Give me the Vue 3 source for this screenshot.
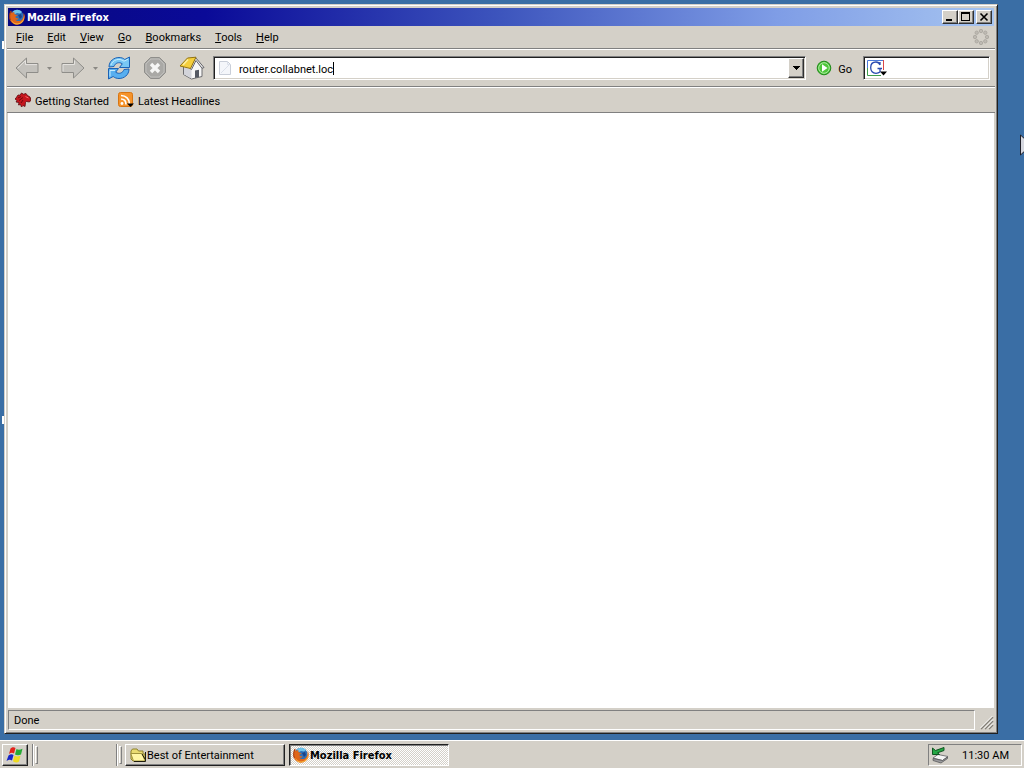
<template>
  <div class="desktop">
    <svg class="symbols" aria-hidden="true">
      <symbol id="firefox" viewBox="0 0 16 16">
        <circle cx="8" cy="7.400" r="6.600" fill="#2d6fb8" />
        <path d="M3.500 3C6 0 10.500 0 13 3l-2 1.500-3-.5-2 1z" fill="#6fc3ea" />
        <path d="M9 6l3-1 1 3-2 2z" fill="#1b4287" />
        <path d="M2 1.500C.2 4-.2 8.500 1.200 11.500 3 15 7 16.500 10.500 15.300 15 13.700 16.600 9 15.300 5.200l-.7-1.500c.3 3-.2 5.600-2 7.200-2 1.700-5 1.600-6.300-.3 1.500.5 2.600 0 3.500-1.100-2 .2-3.200-.5-3.500-1.700.5-.8 1.500-.8 2.400-1.400C7.500 5.700 6 5.600 5.500 5 5 4.500 5.300 3.700 5.500 3 4 3.200 3.300 3.500 2.800 4z" fill="#e0661a" />
        <path d="M14.600 4.500c1 4-.5 7.700-3.500 9.200-3.500 1.700-7.300.2-8.800-3 .8 4 4.500 5.600 8.200 4.300C15 13.500 16.200 8.500 14.600 4.500z" fill="#f9b63a" />
        <path d="M2 2C.5 5 .2 8 1.300 11" fill="none" stroke="#9c3510" />
      </symbol>
    </svg>

    <span class="label-edge first"></span>
    <span class="label-edge second"></span>

    <main class="window">
      <header class="title-bar">
        <svg class="icon16"><use href="#firefox" /></svg>
        <h1>Mozilla Firefox</h1>
        <div class="window-buttons">
          <button type="button" aria-label="Minimize">
            <svg width="12" height="10" shape-rendering="crispEdges"><path d="M2 7h6v2H2z" /></svg>
          </button>
          <button type="button" aria-label="Maximize">
            <svg width="12" height="10" shape-rendering="crispEdges"><path d="M1 0h9v9H1zM2 2v6h7V2z" fill-rule="evenodd" /></svg>
          </button>
          <button type="button" class="close" aria-label="Close">
            <svg width="12" height="10"><path d="M2.500 1.500l7 7M9.500 1.500l-7 7" stroke="#000" stroke-width="1.600" /></svg>
          </button>
        </div>
      </header>

      <nav class="menu-bar">
        <button v-for="item in menus" :key="item" type="button"><u>{{ item[0] }}</u>{{ item.slice(1) }}</button>
        <svg class="throbber" width="16" height="16" viewBox="0 0 16 16" fill="#bebab3" stroke="#a8a49d" stroke-width=".8">
          <circle cx="8" cy="2" r="1.700" />
          <circle cx="12.300" cy="3.700" r="1.700" />
          <circle cx="14" cy="8" r="1.700" />
          <circle cx="12.300" cy="12.300" r="1.700" />
          <circle cx="8" cy="14" r="1.700" />
          <circle cx="3.700" cy="12.300" r="1.700" />
          <circle cx="2" cy="8" r="1.700" />
          <circle cx="3.700" cy="3.700" r="1.700" />
        </svg>
      </nav>

      <div class="toolbar">
        <button type="button" class="tool" aria-label="Back">
          <svg width="24" height="24" viewBox="0 0 24 24">
            <path d="M1 12L11.500 2v5.500H23v9H11.500V22z" fill="#c3c1bc" stroke="#8e8d89" stroke-linejoin="round" />
            <path d="M2.800 12L10.500 4.600v4H22" fill="none" stroke="#e5e3df" />
          </svg>
        </button>
        <button type="button" class="tool-arrow" aria-label="Back history">
          <svg width="5" height="3"><path d="M0 0h5L2.500 3z" fill="#8a8883" /></svg>
        </button>
        <button type="button" class="tool forward" aria-label="Forward">
          <svg width="24" height="24" viewBox="0 0 24 24">
            <path d="M23 12L12.500 2v5.500H1v9h11.500V22z" fill="#c3c1bc" stroke="#8e8d89" stroke-linejoin="round" />
            <path d="M2 15.500v-7h11.500v-4" fill="none" stroke="#e5e3df" />
          </svg>
        </button>
        <button type="button" class="tool-arrow" aria-label="Forward history">
          <svg width="5" height="3"><path d="M0 0h5L2.500 3z" fill="#8a8883" /></svg>
        </button>
        <button type="button" class="tool reload" aria-label="Reload">
          <svg width="24" height="24" viewBox="0 0 24 24" stroke="#1c62b5" stroke-linejoin="round">
            <path d="M2 11c0-6 5-9.500 10-9.500 2.500 0 4.500.8 5.800 2L22.500 1v10.500H12.500l2.800-3.700C12 5.500 8 7 7 10.500z" fill="#78c7f5" />
            <path d="M22 13c0 6-5 9.500-10 9.500-2.500 0-4.500-.8-5.800-2L1.500 23V12.500h10l-2.800 3.700c3.300 2.300 7.300.8 8.300-2.700z" fill="#58aff0" />
            <path d="M4 9c1.500-5 8-7.500 13-3.800l4-2M3 20.500v-6h5" fill="none" stroke="#c5ecff" />
          </svg>
        </button>
        <button type="button" class="tool stop" aria-label="Stop">
          <svg width="24" height="24" viewBox="0 0 24 24">
            <path d="M7.500 1.500h9l6 6v9l-6 6h-9l-6-6v-9z" fill="#aaa9a6" stroke="#8f8e8b" />
            <path d="M8 3h8l5 5v8l-5 5H8l-5-5V8z" fill="none" stroke="#bfbebb" />
            <path d="M8 8l8 8M16 8l-8 8" stroke="#f6f6f5" stroke-width="3.400" />
          </svg>
        </button>
        <button type="button" class="tool home" aria-label="Home">
          <svg width="26" height="24" viewBox="0 0 26 24" stroke-linejoin="round">
            <path d="M4.500 10.500v8l8 4.500 10.500-2.500V11L17 3.500z" fill="#f7f7f7" stroke="#6d6d70" />
            <path d="M5 11.500l7.500 1.500v9.500L5 18.300z" fill="#d3d4da" />
            <path d="M16 22v-7.500l4-.8v7.300z" fill="#555963" />
            <path d="M16.500 1.500L25 11.500l-2 .8-6-7.800-4.500 9-1.500-1z" fill="#ececec" stroke="#65656a" />
            <path d="M8.500 2L17 1.200 11.500 12.500 1 10z" fill="#f5cf3d" stroke="#927312" />
            <path d="M9 3.500L4 9" stroke="#fff0a0" stroke-width="1.500" />
          </svg>
        </button>

        <div class="field address">
          <svg width="12" height="14" viewBox="0 0 12 14">
            <path d="M.5.500h8l3 3v10H.5z" fill="#f4f6fa" stroke="#c9ced8" />
            <path d="M8.500.500v3h3M2 12l8-8" fill="none" stroke="#dbe0ea" />
          </svg>
          <input v-model="address" class="address-text" type="text" aria-label="Address" />
          <span class="caret"></span>
          <button type="button" class="drop" aria-label="Show history">
            <svg width="7" height="4" shape-rendering="crispEdges"><path d="M0 0h7L3.500 4z" /></svg>
          </button>
        </div>

        <button type="button" class="go">
          <svg width="16" height="16" viewBox="0 0 16 16">
            <circle cx="8" cy="8" r="6.800" fill="#3dba2d" stroke="#218a19" />
            <circle cx="8" cy="8" r="5.300" fill="#4fc63c" stroke="#b6edaa" />
            <path d="M6 4.200l5.500 3.800L6 11.800z" fill="#fff" />
          </svg>
          <span>Go</span>
        </button>

        <div class="field search">
          <button type="button" class="engine" aria-label="Search engine">
            <svg width="21" height="18" viewBox="0 0 21 18">
              <path d="M.5 16V1.500H16" fill="none" stroke="#4a78d8" />
              <path d="M.5 9v7.500H14" fill="none" stroke="#3f9e4d" />
              <path d="M16.500 1v10" stroke="#d8474b" />
              <path d="M13 6C12.300 3.800 11 3 9 3 5.700 3 3.700 5.300 3.700 8.700S5.700 14.300 9 14.300c1.800 0 3-.5 4-1.300V9.500M10.500 9.500H15M13 3v3" fill="none" stroke="#2748b0" stroke-width="1.300" />
              <path d="M13 12.500h7L16.500 16.500z" fill="#000" />
            </svg>
          </button>
          <input v-model="query" type="text" aria-label="Search" />
        </div>
      </div>

      <nav class="bookmarks">
        <a href="#">
          <svg width="16" height="16" viewBox="0 0 16 16">
            <path d="M1 6l2-3 2 .2L6.500 1l2 1.200L11 1.500l1.500 2L15 5l1 3-1.500 2-3-.5-1 1-.5 4-2-1-1.500 1.500-1-2.500-2 .5.500-2.500L1 10l1-1.500L0 7z" fill="#c5161d" stroke="#5c0a10" stroke-width=".8" />
            <path d="M3 6l3-1.500M4 8.500l4-3M6 11l2-3" stroke="#6f080e" />
            <path d="M10.500 4.500l3 1.500" stroke="#ff686b" />
          </svg>
          <span>Getting Started</span>
        </a>
        <a href="#">
          <svg width="16" height="16" viewBox="0 0 16 16">
            <rect x=".5" y=".5" width="14" height="14" rx="2" fill="#f5932b" stroke="#d87512" />
            <circle cx="4" cy="11.500" r="1.400" fill="#fff" />
            <path d="M3 7c3 0 5 2 5 5.500M3 3.500c5 0 8.500 3.500 8.500 8.500" fill="none" stroke="#fff" stroke-width="1.600" />
            <path d="M9 11.500h7L12.500 15z" />
          </svg>
          <span>Latest Headlines</span>
        </a>
      </nav>

      <section class="page"></section>

      <footer class="status-bar">
        <span class="status-text">Done</span>
        <svg class="grip" width="14" height="14">
          <path d="M1 13L13 1M5 13l8-8M9 13l4-4" stroke="#858179" stroke-width="1.500" />
          <path d="M0 12.500L12.500 0M4 12.500L13 3.500M8 12.500l5-5" stroke="#fff" />
        </svg>
      </footer>
    </main>

    <svg class="pointer" width="4" height="22" viewBox="0 0 4 22">
      <path d="M.5 1v20L8 14V8z" fill="#d5d7df" stroke="#20202a" />
    </svg>

    <footer class="taskbar">
      <button type="button" class="start" aria-label="Start">
        <svg width="18" height="18" viewBox="0 0 18 18">
          <path d="M4.500 2.500C6.500.7 8 1 9.500 2L8 7.500C6.500 6.500 5 6.500 3 8z" fill="#e3231b" />
          <path d="M10.500 3c1.500 1 3.500 1 6-.2L15 8.500c-2 1-4 1-6 0z" fill="#26aa35" />
          <path d="M2.500 9.500c2-1.500 3.500-1.500 5-.5L6 14.500c-1.500-1-3-1-5.500.5z" fill="#1725c7" />
          <path d="M8.500 9.800c2 1 3.500 1 6 0L13 15.500c-2 1.500-4 1-6-.3z" fill="#eedb21" />
        </svg>
      </button>
      <span class="divider"></span>
      <span class="handle"></span>
      <div class="quick-launch"></div>
      <span class="divider"></span>
      <span class="handle"></span>
      <button type="button" class="task">
        <svg width="16" height="16" viewBox="0 0 16 16">
          <path d="M1 4l1.500-2H7l1.500 2H13v3h2v7H3L1 12z" fill="#e9dc72" stroke="#8d812d" />
          <path d="M.8 6.500H12l3 7.500H3.500z" fill="#fff7a5" stroke="#a0943c" />
          <path d="M15.500 5v9.500H4M12 7l3 5" fill="none" stroke="#1e1c0d" />
        </svg>
        <span>Best of Entertainment</span>
      </button>
      <button type="button" class="task active">
        <svg class="icon16"><use href="#firefox" /></svg>
        <span>Mozilla Firefox</span>
      </button>
      <div class="tray">
        <svg width="18" height="18" viewBox="0 0 18 18">
          <path d="M2 12l5-3.500 10 2-5.500 4z" fill="#f5f5f5" stroke="#77777a" />
          <path d="M2 12.500v2l8 2.500 6.500-4.500V11l-5 3.500z" fill="#9b9b9d" stroke="#4f4f52" stroke-width=".7" />
          <path d="M1.500 2v6.500h7L6.500 6.800 13 4.500V1.500L4.500 4.500z" fill="#24a743" stroke="#0e5420" />
        </svg>
        <time>11:30 AM</time>
      </div>
    </footer>
  </div>
</template>

<script setup>
import { ref } from 'vue'

const menus = ['File', 'Edit', 'View', 'Go', 'Bookmarks', 'Tools', 'Help']

const address = ref('router.collabnet.loc')
const query = ref('')
</script>

<style>
body {
  margin: 0;
}
</style>

<style scoped>
.desktop {
  position: relative;
  display: flex;
  flex-direction: column;
  height: 100vh;
  overflow: hidden;
  background: #3a6ea5;
  color: #000;
  font: 11px/14px Tahoma, Roboto, sans-serif;
}

.desktop * {
  box-sizing: border-box;
}

.symbols {
  position: absolute;
  width: 0;
  height: 0;
}

.icon16 {
  width: 16px;
  height: 16px;
}

svg {
  display: block;
  flex: none;
}

button,
input {
  margin: 0;
  padding: 0;
  border: 0;
  background: none;
  color: inherit;
  font: inherit;
  white-space: nowrap;
}

input {
  outline: none;
}

.label-edge {
  position: absolute;
  left: 2px;
  width: 2px;
  height: 8px;
  background: #fff;
}

.label-edge.first {
  top: 41px;
}

.label-edge.second {
  top: 416px;
}

.window {
  position: relative;
  display: flex;
  flex: 1;
  flex-direction: column;
  min-height: 0;
  margin: 4px 26px 6px 4px;
  padding: 2px;
  background: #d4d0c8;
  border: 1px solid #d4d0c8;
  border-right-color: #202020;
  border-bottom-color: #202020;
  box-shadow: inset 1px 1px #fff, inset -1px -1px #808080;
}

.title-bar {
  display: flex;
  flex: none;
  align-items: center;
  height: 18px;
  margin: 1px 1px 0;
  padding: 0 2px 0 1px;
  background: linear-gradient(to right, #08087f, #0a0a98 20%, #3d55bd 50%, #7f9de6 78%, #a6c4f0);
  color: #fff;
}

.title-bar h1 {
  flex: 1;
  margin: 0 0 0 2px;
  padding-top: 2px;
  font: bold 11px/14px Tahoma, "DejaVu Sans Condensed", sans-serif;
}

.window-buttons {
  display: flex;
}

.window-buttons button {
  display: flex;
  align-items: center;
  justify-content: center;
  width: 16px;
  height: 14px;
  background: #d4d0c8;
  border: 1px solid;
  border-color: #fff #303030 #303030 #fff;
  box-shadow: inset -1px -1px #808080;
}

.window-buttons .close {
  margin-left: 2px;
}

.menu-bar {
  display: flex;
  flex: none;
  align-items: center;
  height: 23px;
  padding: 0 6px 0 9px;
  gap: 14px;
  border-bottom: 1px solid #808080;
}

.menu-bar button {
  padding-top: 2px;
}

.throbber {
  margin-left: auto;
}

.toolbar {
  display: flex;
  flex: none;
  align-items: center;
  height: 38px;
  padding: 0 5px 0 8px;
  border-top: 1px solid #fff;
  border-bottom: 1px solid #808080;
}

.tool-arrow {
  margin-left: 8px;
}

.forward {
  margin-left: 9px;
}

.reload {
  margin-left: 9px;
}

.stop,
.home {
  margin-left: 12px;
}

.field {
  display: flex;
  align-items: center;
  height: 24px;
  background: #fff;
  border: 1px solid;
  border-color: #808080 #fff #fff #808080;
  box-shadow: inset 1px 1px #202020, inset -1px -1px #d4d0c8;
}

.address {
  flex: 1;
  min-width: 0;
  margin-left: 8px;
  padding: 2px 1px 2px 5px;
}

.address-text {
  min-width: 0;
  height: 16px;
  margin-left: 8px;
  padding-top: 2px;
  field-sizing: content;
}

.caret {
  width: 1px;
  height: 13px;
  background: #000;
}

.drop {
  display: flex;
  align-items: center;
  justify-content: center;
  width: 16px;
  height: 20px;
  margin-left: auto;
  background: #d4d0c8;
  border: 1px solid;
  border-color: #fff #303030 #303030 #fff;
  box-shadow: inset -1px -1px #808080;
}

.go {
  display: flex;
  align-items: center;
  gap: 6px;
  margin: 0 11px 0 10px;
}

.go span,
.bookmarks span {
  padding-top: 3px;
}

.search {
  width: 127px;
  padding: 2px 3px;
}

.search input {
  flex: 1;
  min-width: 0;
}

.bookmarks {
  display: flex;
  flex: none;
  align-items: center;
  gap: 9px;
  height: 26px;
  padding-left: 8px;
  border-top: 1px solid #fff;
  border-bottom: 1px solid #808080;
}

.bookmarks a {
  display: flex;
  align-items: center;
  gap: 4px;
  color: #000;
  text-decoration: none;
}

.page {
  flex: 1;
  margin: 0 1px;
  background: #fff;
}

.status-bar {
  display: flex;
  flex: none;
  align-items: flex-end;
  height: 23px;
  padding: 2px 1px 1px;
}

.status-text {
  flex: 1;
  height: 20px;
  padding: 3px 5px 0;
  border: 1px solid;
  border-color: #808080 #fff #fff #808080;
}

.grip {
  margin-left: 5px;
}

.pointer {
  position: absolute;
  top: 134px;
  right: 0;
}

.taskbar {
  display: flex;
  flex: none;
  align-items: center;
  height: 28px;
  padding: 2px 2px 1px;
  background: #d4d0c8;
  border-top: 1px solid #fff;
}

.start {
  display: flex;
  align-items: center;
  justify-content: center;
  width: 26px;
  height: 22px;
}

.start,
.task {
  background: #d4d0c8;
  border: 1px solid;
  border-color: #fff #202020 #202020 #fff;
  box-shadow: inset -1px -1px #808080;
}

.divider {
  width: 2px;
  height: 22px;
  margin-left: 4px;
  border-left: 1px solid #808080;
  border-right: 1px solid #fff;
}

.handle {
  width: 3px;
  height: 18px;
  margin: 0 3px 0 1px;
  border: 1px solid;
  border-color: #fff #808080 #808080 #fff;
}

.quick-launch {
  width: 71px;
}

.task {
  display: flex;
  align-items: center;
  width: 160px;
  height: 22px;
  padding: 0 4px;
  gap: 1px;
}

.task span,
.tray time {
  padding-top: 2px;
}

.task.active {
  margin-left: 4px;
  padding: 0 3px;
  background: repeating-conic-gradient(#fff 0 25%, #d4d0c8 0 50%) 0 0 / 2px 2px;
  border-color: #202020 #fff #fff #202020;
  box-shadow: inset 1px 1px #808080;
  font: bold 11px/14px Tahoma, "DejaVu Sans Condensed", sans-serif;
}

.tray {
  display: flex;
  align-items: center;
  justify-content: space-between;
  width: 94px;
  height: 22px;
  margin-left: auto;
  padding: 0 12px 0 2px;
  border: 1px solid;
  border-color: #808080 #fff #fff #808080;
}
</style>
